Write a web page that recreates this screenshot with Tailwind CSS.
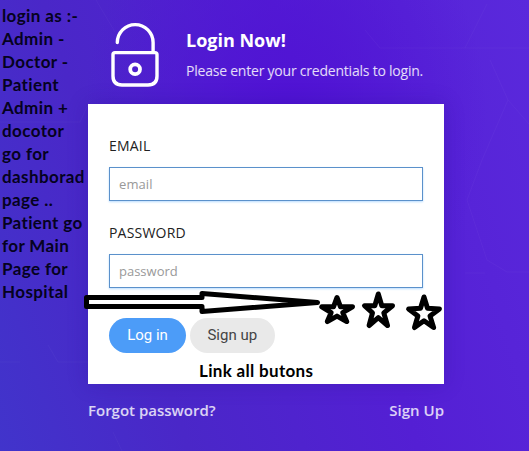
<!DOCTYPE html>
<html lang="en">
<head>
<meta charset="utf-8">
<title>Login</title>
<script src="https://cdn.jsdelivr.net/npm/@tailwindcss/browser@4"></script>
</head>
<body class="relative h-[451px] w-[529px] overflow-hidden bg-[linear-gradient(72deg,#4134cb_0%,#4a27c8_28%,#541fd4_62%,#5a29dc_100%)] font-['Open_Sans',sans-serif]">
<!-- background glow and hexagon lines -->
<div class="absolute inset-0 bg-[radial-gradient(ellipse_at_54%_25%,#5012d4_0%,#5012d400_50%)]"></div>
<svg class="absolute inset-0" width="529" height="451" fill="none" stroke="#fff" stroke-opacity=".03">
  <path d="M96 0l19 32M0 122h80l10-22M365 30l15 18h149M465 48l22-44M490 60l18 40 21 24M467 200l15-40 26-60M467 200l20 60 20 12h22M0 362h20M48 345l10 17h30M113 432l9 19M465 273h20"/>
</svg>
<main class="relative flex">
  <aside class="w-[88px] pt-[4px] pl-[2px] font-[Lato,sans-serif] text-[17px] leading-[23px] font-bold tracking-[0.4px] whitespace-nowrap text-[#050220]">
    <p>login as :-</p><p>Admin -</p><p>Doctor -</p><p>Patient</p><p>Admin +</p><p>docotor</p><p>go for</p><p>dashborad</p><p>page ..</p><p class="tracking-[0.35px]">Patient go</p><p>for Main</p><p>Page for</p><p>Hospital</p>
  </aside>
  <section class="w-[356px]">
    <header class="flex h-[104px] pt-[20px] pl-[21px]">
      <svg class="h-[70px] w-[52px] shrink-0" viewBox="109 20 52 70" fill="none" stroke="#fff" stroke-width="3.4" stroke-linecap="round">
        <path d="M117.3 42.5a17.9 17.9 0 0 1 35.8 0V52"/>
        <path d="M115 52.6h40q2 0 2 2V76q0 9-9 9h-26q-9 0-9-9V54.600q0-2 2-2z"/>
        <circle cx="135.100" cy="69.300" r="4.900" stroke-width="3.800"/>
      </svg>
      <div class="pt-[8px] pl-[25px] whitespace-nowrap text-white">
        <h1 class="text-[18px] leading-[25px] font-bold">Login Now!</h1>
        <p class="mt-[8px] text-[14px] leading-[20px] tracking-[-0.22px] text-white/85">Please enter your credentials to login.</p>
      </div>
    </header>
    <form class="h-[280px] bg-white px-[21px] pt-[32px] shadow-[0_0_18px_#2a129955]">
      <label class="block h-[31px] text-[14px] leading-[20px] tracking-[0.2px] text-[#222]">EMAIL</label>
      <input class="block h-[34px] w-[314px] border border-[#5b91cb] px-[9px] text-[13px] tracking-[0.1px] shadow-[0_1px_2px_#b9dcff] placeholder:text-[#999]" placeholder="email">
      <label class="mt-[22px] block h-[31px] text-[14px] leading-[20px] tracking-[0.2px] text-[#222]">PASSWORD</label>
      <input class="block h-[34px] w-[314px] border border-[#5b91cb] px-[9px] text-[13px] shadow-[0_1px_2px_#b9dcff] placeholder:text-[#999]" placeholder="password">
      <div class="mt-[30px] flex gap-[4px] font-[Roboto,sans-serif] text-[15px]">
        <button type="button" class="h-[35px] w-[77px] rounded-full bg-[#4c9cf8] text-white">Log in</button>
        <button type="button" class="h-[35px] w-[84.500px] rounded-full bg-[#e9e9e9] text-[#444]">Sign up</button>
      </div>
      <p class="mt-[6px] pl-[90px] font-[Lato,sans-serif] text-[17px] leading-[23px] font-bold tracking-[0.32px] whitespace-nowrap text-black">Link all butons</p>
    </form>
    <footer class="flex justify-between pt-[15px] text-[15px] leading-[22px] font-semibold text-white/80"><a>Forgot password?</a><a>Sign Up</a></footer>
  </section>
</main>
<!-- hand-drawn arrow and stars over the card -->
<svg class="absolute inset-0" width="529" height="451" stroke="#000" stroke-width="5" stroke-linejoin="round" fill="none">
  <path fill="#fff" d="M86.500 297.500H202v-4L317.500 302.500 202 311.500v-5H86.500z"/>
  <path d="M337 297.500l3.500 9.300h12l-9.800 5.800 4 9-9.700-5.500-9.700 5.500 3.900-9-9.400-5.800h11.700z"/>
  <path d="M378.300 294l3.500 11.700h10.700l-8.700 7.200 3.700 12.600-9.200-7.800-9.200 7.800 3.400-12.600-8-7.200h10.300z"/>
  <path d="M424 297l3.500 11.300 11.900.6-9.400 7.100 3.600 11.500-9.600-6.800-9.500 6.800 3.400-11.500-9.300-7.100 11.900-.6z"/>
</svg>
</body>
</html>
